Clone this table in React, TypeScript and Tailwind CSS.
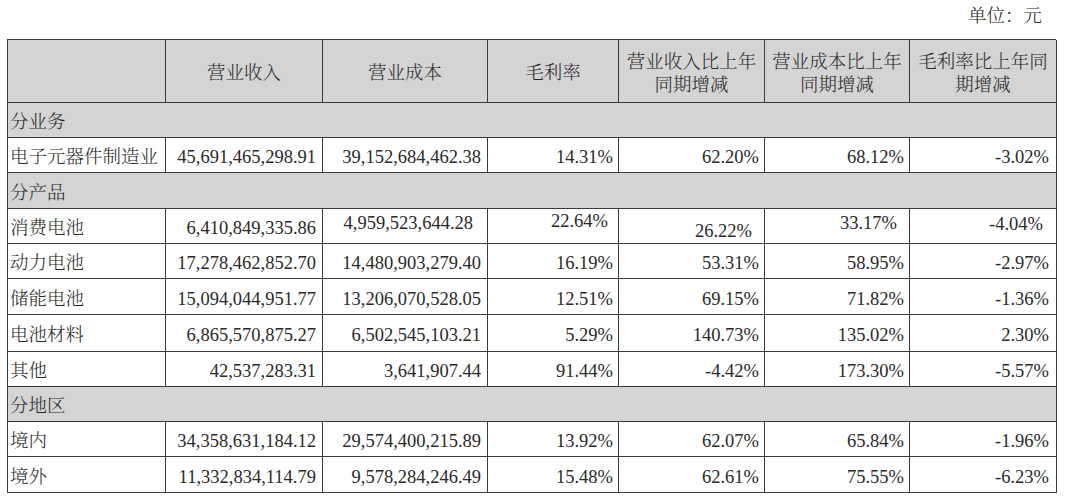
import React from "react";

const FONT = {
  fontFamily:
    '"Liberation Serif", "Noto Serif CJK SC", "Noto Sans CJK SC", serif',
};

const cellBase = "border-r border-b border-[#3a3a3a] flex items-center";

type Row =
  | { kind: "section"; label: string; h: string }
  | { kind: "data"; cells: string[]; h: string; cls?: string[] };

const rows: Row[] = [
  { kind: "section", label: "分业务", h: "h-[35px]" },
  {
    kind: "data",
    h: "h-[35px]",
    cells: ["电子元器件制造业", "45,691,465,298.91", "39,152,684,462.38", "14.31%", "62.20%", "68.12%", "-3.02%"],
  },
  { kind: "section", label: "分产品", h: "h-[36px]" },
  {
    kind: "data",
    h: "h-[35px]",
    cells: ["消费电池", "6,410,849,335.86", "4,959,523,644.28", "22.64%", "26.22%", "33.17%", "-4.04%"],
    cls: [
      "justify-start pl-[2px] pt-[5px]",
      "justify-end pr-[6px] pt-[5px]",
      "justify-end pr-[14px] pb-[5px]",
      "justify-end pr-[10px] pb-[9px]",
      "justify-end pr-[12px] pt-[11px]",
      "justify-end pr-[12px] pb-[5px]",
      "justify-end pr-[13px] pb-[3px]",
    ],
  },
  {
    kind: "data",
    h: "h-[35px]",
    cells: ["动力电池", "17,278,462,852.70", "14,480,903,279.40", "16.19%", "53.31%", "58.95%", "-2.97%"],
  },
  {
    kind: "data",
    h: "h-[36px]",
    cells: ["储能电池", "15,094,044,951.77", "13,206,070,528.05", "12.51%", "69.15%", "71.82%", "-1.36%"],
  },
  {
    kind: "data",
    h: "h-[37px]",
    cells: ["电池材料", "6,865,570,875.27", "6,502,545,103.21", "5.29%", "140.73%", "135.02%", "2.30%"],
  },
  {
    kind: "data",
    h: "h-[35px]",
    cells: ["其他", "42,537,283.31", "3,641,907.44", "91.44%", "-4.42%", "173.30%", "-5.57%"],
  },
  { kind: "section", label: "分地区", h: "h-[35px]" },
  {
    kind: "data",
    h: "h-[35px]",
    cells: ["境内", "34,358,631,184.12", "29,574,400,215.89", "13.92%", "62.07%", "65.84%", "-1.96%"],
  },
  {
    kind: "data",
    h: "h-[36px]",
    cells: ["境外", "11,332,834,114.79", "9,578,284,246.49", "15.48%", "62.61%", "75.55%", "-6.23%"],
  },
];

const defaultCls = [
  "justify-start pl-[2px] pt-[5px]",
  "justify-end pr-[6px] pt-[5px]",
  "justify-end pr-[6px] pt-[5px]",
  "justify-end pr-[5px] pt-[5px]",
  "justify-end pr-[5px] pt-[5px]",
  "justify-end pr-[5px] pt-[5px]",
  "justify-end pr-[7px] pt-[5px]",
];

const headers: React.ReactNode[] = [
  "",
  "营业收入",
  "营业成本",
  "毛利率",
  <>
    营业收入比上年
    <br />
    同期增减
  </>,
  <>
    营业成本比上年
    <br />
    同期增减
  </>,
  <>
    毛利率比上年同
    <br />
    期增减
  </>,
];

export default function App() {
  return (
    <div
      className="w-[1080px] h-[501px] bg-white text-[#2a2a2a] text-[18.5px] leading-[23px] font-light overflow-hidden"
      style={FONT}
    >
      <div className="h-[39px] flex items-center justify-end pr-[38px] pb-[6px]">
        单位：元
      </div>
      <div className="pl-[7px]">
        <div className="grid grid-cols-[158px_157px_165px_131px_146px_145px_147px] w-[1049px] border-l border-t border-[#3a3a3a]">
          {headers.map((h, i) => (
            <div
              key={"h" + i}
              className={`${cellBase} h-[63px] justify-center text-center bg-[#d4d4d4] pt-[5px]`}
            >
              <div>{h}</div>
            </div>
          ))}
          {rows.map((r, ri) =>
            r.kind === "section" ? (
              <div
                key={"s" + ri}
                className={`${cellBase} ${r.h} col-span-7 bg-[#d4d4d4] justify-start pl-[2px] pt-[5px]`}
              >
                {r.label}
              </div>
            ) : (
              r.cells.map((c, ci) => (
                <div
                  key={"d" + ri + "-" + ci}
                  className={`${cellBase} ${r.h} whitespace-nowrap ${(r.cls ?? defaultCls)[ci]}`}
                >
                  {c}
                </div>
              ))
            )
          )}
        </div>
      </div>
    </div>
  );
}
